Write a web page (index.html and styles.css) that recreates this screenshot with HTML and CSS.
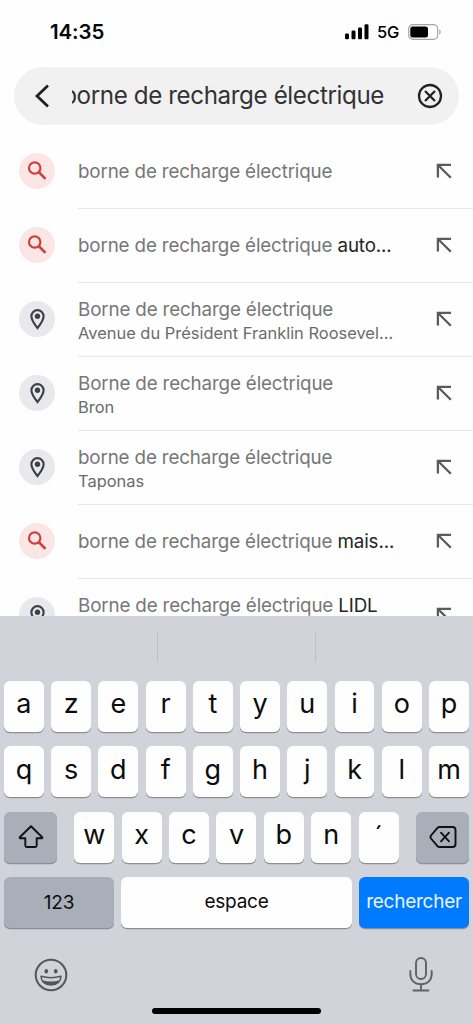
FILE: index.html
```
<!DOCTYPE html>
<html lang="fr">
<head>
<meta charset="utf-8">
<meta name="viewport" content="width=device-width, initial-scale=1">
<title>Recherche</title>
<link rel="stylesheet" href="styles.css">
</head>
<body>
<svg class="defs" width="0" height="0" aria-hidden="true">
  <symbol id="search" viewBox="0 0 36 36"><circle cx="15.700" cy="15" r="5.700" fill="none" stroke="currentColor" stroke-width="2.200"/><path d="M19.700 19L26.500 25.800" fill="none" stroke="currentColor" stroke-width="2.600"/></symbol>
  <symbol id="pin" viewBox="0 0 36 36"><path d="M18.500 27C15.200 22.800 12.400 19.100 12.400 15.200a6.100 6.100 0 0 1 12.200 0C24.600 19.100 21.800 22.800 18.500 27Z" fill="none" stroke="currentColor" stroke-width="2.100"/><circle cx="18.500" cy="15.200" r="2.700" fill="currentColor"/></symbol>
  <symbol id="fill" viewBox="0 0 16 16"><path d="M1.900 14.500V1.900H15M2 2L14.800 14.800" fill="none" stroke="currentColor" stroke-width="2.300"/></symbol>
</svg>
<div class="screen">
  <header class="status">
    <span class="time">14:35</span>
    <span class="indicators">
      <svg class="signal" width="24" height="16" viewBox="0 0 24 16"><rect x="0" y="9.500" width="4" height="5.800" rx="1.200"/><rect x="6.500" y="6.500" width="4" height="8.800" rx="1.200"/><rect x="13" y="3.500" width="4" height="11.800" rx="1.200"/><rect x="19.500" y="0.300" width="4" height="15" rx="1.200"/></svg>
      <span class="network">5G</span>
      <svg class="battery" width="34" height="16" viewBox="0 0 34 16"><rect x="0.700" y="0.700" width="29" height="14.600" rx="4.300" fill="none" stroke="#a5a5a5" stroke-width="1.200"/><rect x="2.300" y="2.500" width="17.700" height="11" rx="2.500"/><path d="M31.300 5.300q3 2.700 0 5.400Z" fill="#a5a5a5"/></svg>
    </span>
  </header>
  <div class="searchbar">
    <svg class="back" width="16" height="26" viewBox="0 0 16 26"><path d="M14 2.500L3 13L14 23.500" fill="none" stroke="#222" stroke-width="2.800"/></svg>
    <div class="query"><span>borne de recharge électrique</span></div>
    <svg class="clear" width="26" height="26" viewBox="0 0 26 26"><g fill="none" stroke="#222" stroke-width="2.300"><circle cx="13" cy="13" r="11"/><path d="M8 8L18 18M18 8L8 18"/></g></svg>
  </div>
  <main class="results">
    <div class="row"><span class="badge red"><svg><use href="#search"/></svg></span><div class="body"><div class="text"><p class="title">borne de recharge électrique</p></div><svg class="arrow"><use href="#fill"/></svg></div></div>
    <div class="row"><span class="badge red"><svg><use href="#search"/></svg></span><div class="body"><div class="text"><p class="title">borne de recharge électrique <b>auto...</b></p></div><svg class="arrow"><use href="#fill"/></svg></div></div>
    <div class="row"><span class="badge"><svg><use href="#pin"/></svg></span><div class="body"><div class="text two"><p class="title">Borne de recharge électrique</p><p class="sub">Avenue du Président Franklin Roosevel...</p></div><svg class="arrow"><use href="#fill"/></svg></div></div>
    <div class="row"><span class="badge"><svg><use href="#pin"/></svg></span><div class="body"><div class="text two"><p class="title">Borne de recharge électrique</p><p class="sub">Bron</p></div><svg class="arrow"><use href="#fill"/></svg></div></div>
    <div class="row"><span class="badge"><svg><use href="#pin"/></svg></span><div class="body"><div class="text two"><p class="title">borne de recharge électrique</p><p class="sub">Taponas</p></div><svg class="arrow"><use href="#fill"/></svg></div></div>
    <div class="row"><span class="badge red"><svg><use href="#search"/></svg></span><div class="body"><div class="text"><p class="title">borne de recharge électrique <b>mais...</b></p></div><svg class="arrow"><use href="#fill"/></svg></div></div>
    <div class="row"><span class="badge"><svg><use href="#pin"/></svg></span><div class="body"><div class="text two"><p class="title">Borne de recharge électrique <b>LIDL</b></p><p class="sub">&nbsp;</p></div><svg class="arrow"><use href="#fill"/></svg></div></div>
  </main>
  <section class="keyboard">
    <div class="suggestions"><span></span><span></span><span></span></div>
    <div class="keys">
      <div class="krow"><span class="key">a</span><span class="key">z</span><span class="key">e</span><span class="key">r</span><span class="key">t</span><span class="key">y</span><span class="key">u</span><span class="key">i</span><span class="key">o</span><span class="key">p</span></div>
      <div class="krow"><span class="key">q</span><span class="key">s</span><span class="key">d</span><span class="key">f</span><span class="key">g</span><span class="key">h</span><span class="key">j</span><span class="key">k</span><span class="key">l</span><span class="key">m</span></div>
      <div class="krow third">
        <span class="key mod"><svg width="28" height="26" viewBox="0 0 28 26"><path d="M14 2.300L25.200 13.300Q25.800 14.200 24.700 14.200H19.700V21.500Q19.700 23 18.200 23H9.800Q8.300 23 8.300 21.500V14.200H3.300Q2.200 14.200 2.800 13.300Z" fill="none" stroke="#111" stroke-width="1.900" stroke-linejoin="round"/></svg></span>
        <div class="letters"><span class="key">w</span><span class="key">x</span><span class="key">c</span><span class="key">v</span><span class="key">b</span><span class="key">n</span><span class="key accent">´</span></div>
        <span class="key mod"><svg width="28" height="24" viewBox="0 0 28 24"><g fill="none" stroke="#111" stroke-width="1.900" stroke-linejoin="round" stroke-linecap="round"><path d="M10.500 2H23.500Q26.500 2 26.500 5V19Q26.500 22 23.500 22H10.500Q9.300 22 8.500 21.100L2 13.500Q1 12 2 10.500L8.500 2.900Q9.300 2 10.500 2Z"/><path d="M12 7.700L20 16.300M20 7.700L12 16.300"/></g></svg></span>
      </div>
      <div class="krow bottom"><span class="key mod num">123</span><span class="key space">espace</span><span class="key go">rechercher</span></div>
    </div>
    <footer class="tools">
      <svg width="34" height="34" viewBox="0 0 34 34"><circle cx="17" cy="17" r="15.300" fill="none" stroke="#53565b" stroke-width="2"/><ellipse cx="12.300" cy="13.300" rx="1.800" ry="2.200" fill="#53565b"/><ellipse cx="21.700" cy="13.300" rx="1.800" ry="2.200" fill="#53565b"/><path d="M7 18.300Q17 21 27 18.300Q26.500 27 17 27Q7.500 27 7 18.300Z" fill="none" stroke="#53565b" stroke-width="1.500" stroke-linejoin="round"/><path d="M8.300 22.300Q17 24.800 25.700 22.300Q23.300 27 17 27Q10.700 27 8.300 22.300Z" fill="#53565b"/></svg>
      <svg width="24" height="36" viewBox="0 0 24 36"><g fill="none" stroke="#5f6267" stroke-width="1.900" stroke-linecap="round"><rect x="7" y="1" width="10" height="21" rx="5"/><path d="M1.300 14V17C1.300 23.500 6 27.300 12 27.300S22.700 23.500 22.700 17V14M12 27.500V33.300M4.500 33.500H19.500"/></g></svg>
    </footer>
    <div class="home"></div>
  </section>
</div>
</body>
</html>
```
FILE: styles.css
```
* { box-sizing: border-box; }
body { margin: 0; font-family: Inter, "Liberation Sans", sans-serif; background: #fefefe; }
p { margin: 0; }
svg { display: block; flex: none; }
.defs { position: absolute; }
.screen { width: 473px; height: 1024px; overflow: hidden; display: flex; flex-direction: column; background: #fefefe; }

.status { height: 67px; flex: none; display: flex; justify-content: space-between; padding: 20px 31px 0 50px; }
.time { font-size: 20.5px; line-height: 24px; font-weight: 600; color: #080808; letter-spacing: -0.1px; }
.indicators { display: flex; height: 24px; align-items: center; }
.signal { margin-right: 8px; }
.network { font-size: 16.5px; font-weight: 500; width: 31px; letter-spacing: -0.1px; }

.searchbar { flex: none; height: 58px; margin: 0 14px; border-radius: 29px; background: #f1f1f1; display: flex; align-items: center; padding: 0 16px 0 20px; }
.query { width: 312px; margin-left: 22px; overflow: hidden; display: flex; justify-content: flex-end; font-size: 24.200px; letter-spacing: -0.400px; line-height: 36px; color: #333; white-space: nowrap; }
.clear { margin-left: auto; }

.results { margin-top: 10px; flex: none; height: 481px; overflow: hidden; }
.row { height: 74px; display: flex; align-items: center; padding-left: 19px; }
.badge { width: 36px; height: 36px; border-radius: 50%; background: #e8e8ed; color: #3c4147; flex: none; margin-top: -2px; }
.badge svg { width: 36px; height: 36px; }
.badge.red { background: #fce6e5; color: #cf3f3e; }
.body { flex: 1; height: 74px; margin-left: 23px; border-bottom: 1px solid #e8e8e8; display: flex; align-items: center; justify-content: space-between; padding-right: 21px; }
.text { white-space: nowrap; }
.two { padding-top: 2px; }
.title { font-size: 18.800px; line-height: 25px; letter-spacing: -0.150px; color: #777; }
.title b { font-weight: 400; color: #252525; }
.sub { font-size: 16.450px; line-height: 23px; color: #6b6b6b; }
.arrow { width: 16px; height: 16px; color: #5b5b5b; margin-top: -2px; }

.keyboard { flex: 1; background: #d0d3d9; display: flex; flex-direction: column; }
.suggestions { height: 64.500px; padding: 16px 0; display: flex; flex: none; }
.suggestions span { flex: 1; height: 30px; }
.suggestions span + span { border-left: 1px solid #bbbec4; }
.keys { display: flex; flex-direction: column; gap: 14.500px; padding: 0 4px; }
.krow { display: flex; gap: 7.400px; height: 51px; }
.key { flex: 1; height: 51px; border-radius: 6px; background: #fefefe; box-shadow: 0 1.300px 0 #8b8e93; display: flex; align-items: center; justify-content: center; font-size: 27px; font-weight: 400; line-height: 30px; color: #0c0c0c; padding-bottom: 4px; }
.third { justify-content: space-between; }
.letters { display: flex; gap: 7.400px; width: 324.500px; }
.letters .accent { padding-bottom: 0; }
.key.mod { background: #a8afb8; padding: 0; }
.third > .mod { flex: none; width: 53px; }
.key.num { flex: none; width: 110px; font-size: 19px; letter-spacing: -0.200px; }
.space { font-size: 19px; letter-spacing: -0.250px; padding-bottom: 1px; }
.go { flex: none; width: 110px; font-size: 19px; letter-spacing: -0.250px; background: #007aff; color: #e9f4ff; padding-bottom: 1px; }
.tools { display: flex; justify-content: space-between; align-items: center; padding: 0 40px 0 34px; height: 36px; margin-top: 29px; }
.home { width: 169px; height: 6px; border-radius: 3px; background: #000; margin: 15px auto 0; }
```
